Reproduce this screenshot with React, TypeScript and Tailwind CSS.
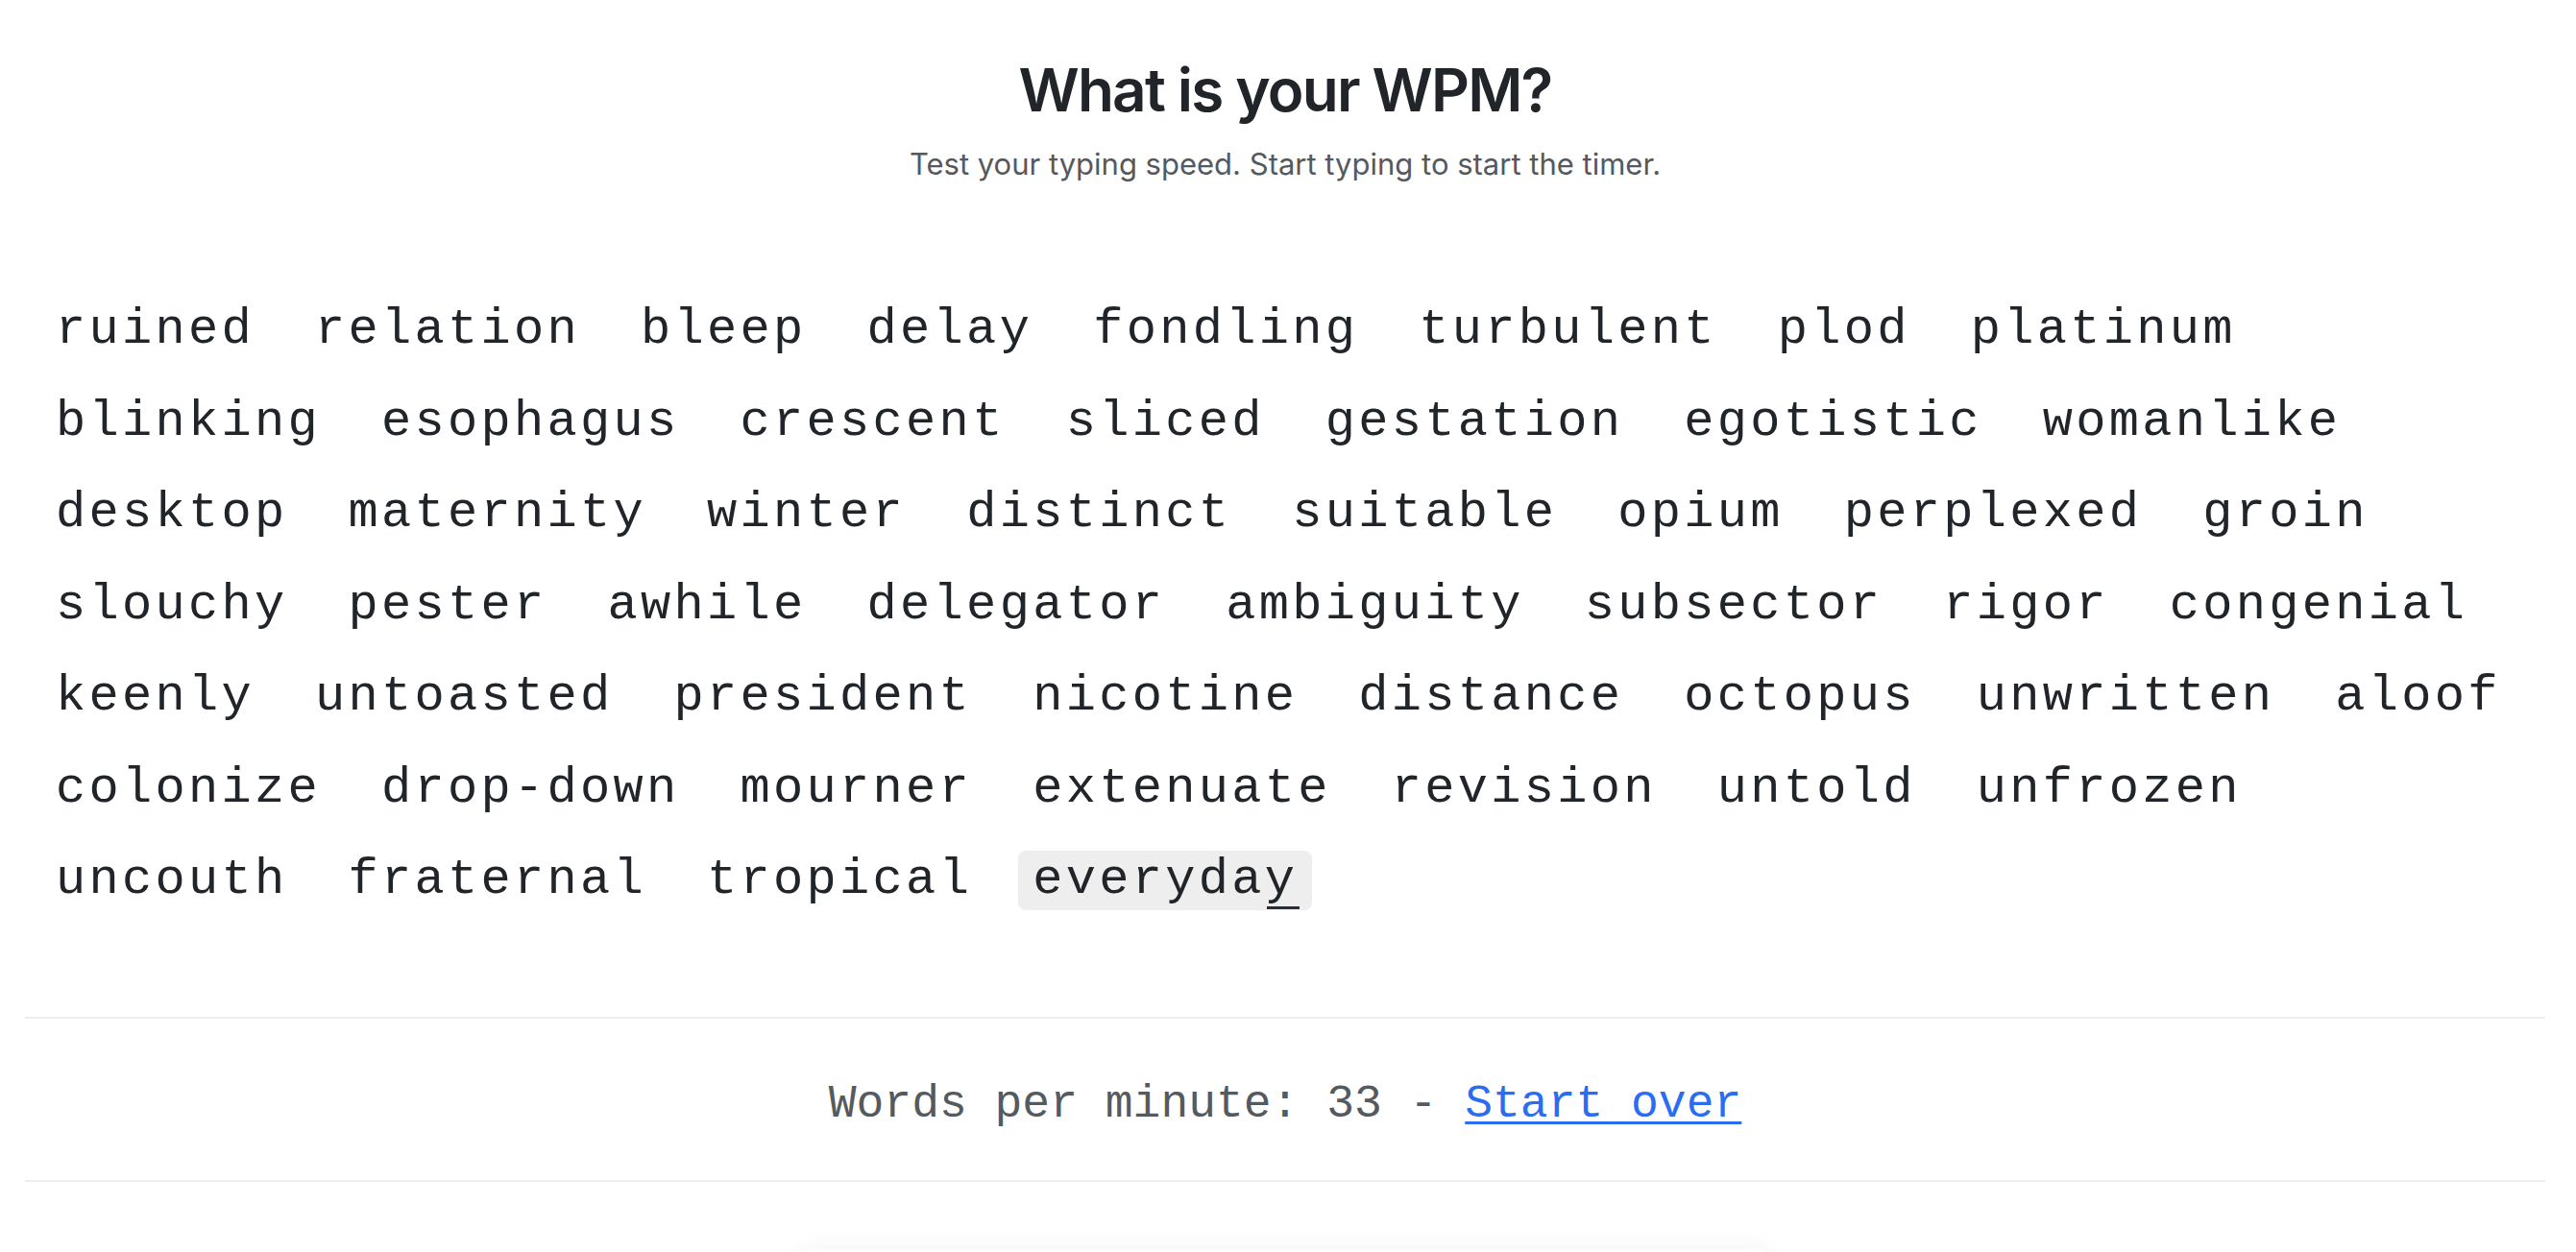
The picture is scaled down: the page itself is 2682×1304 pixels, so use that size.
import React from "react";

const ROWS: string[][] = [
  ["ruined", "relation", "bleep", "delay", "fondling", "turbulent", "plod", "platinum"],
  ["blinking", "esophagus", "crescent", "sliced", "gestation", "egotistic", "womanlike"],
  ["desktop", "maternity", "winter", "distinct", "suitable", "opium", "perplexed", "groin"],
  ["slouchy", "pester", "awhile", "delegator", "ambiguity", "subsector", "rigor", "congenial"],
  ["keenly", "untoasted", "president", "nicotine", "distance", "octopus", "unwritten", "aloof"],
  ["colonize", "drop-down", "mourner", "extenuate", "revision", "untold", "unfrozen"],
  ["uncouth", "fraternal", "tropical", "everyday"],
];

function Word({ text, active }: { text: string; active?: boolean }) {
  if (active) {
    const head = text.slice(0, -1);
    const last = text.slice(-1);
    return (
      <span className="inline-block h-[62px] leading-[62px] px-[15px] rounded-[8px] bg-[#eeeeee] whitespace-pre">
        {head}
        <span className="relative inline-block">
          {last}
          <span className="absolute left-[2px] right-[-2px] bottom-[1px] h-[3px] bg-[#2b2f33]" />
        </span>
      </span>
    );
  }
  return (
    <span className="inline-block h-[62px] leading-[62px] px-[15px] whitespace-pre">{text}</span>
  );
}

export default function App() {
  return (
    <div className="min-h-screen bg-white">
      <div className="ml-[26px] mr-[32px] pt-[56px]">
        <h1
          className="text-center text-[62px] leading-[75px] font-semibold text-[#212529] tracking-[-1.8px]"
          style={{ fontFamily: "Inter, 'Noto Sans', sans-serif" }}
        >
          What is your WPM?
        </h1>
        <p
          className="mt-[17px] text-center text-[31px] leading-[46px] text-[#55595e]"
          style={{ fontFamily: "Inter, 'Noto Sans', sans-serif" }}
        >
          Test your typing speed. Start typing to start the timer.
        </p>

        <div
          className="mt-[119px] pl-[17px] flex flex-col gap-y-[33.5px] text-[52px] tracking-[3.3px] text-[#212529]"
          style={{ fontFamily: "'Liberation Mono', 'DejaVu Sans Mono', monospace" }}
        >
          {ROWS.map((row, i) => (
            <div key={i} className="flex gap-x-[33px]">
              {row.map((w, j) => (
                <Word key={j} text={w} active={i === ROWS.length - 1 && j === row.length - 1} />
              ))}
            </div>
          ))}
        </div>

        <div
          className="mt-[111px] border-y-2 border-[#eeeeee] pt-[53px] pb-[43px] text-center text-[48px] leading-[72px] text-[#555a5f]"
          style={{ fontFamily: "'Liberation Mono', 'DejaVu Sans Mono', monospace" }}
        >
          Words per minute: 33 -{" "}
          <a
            href="#"
            className="text-[#2a6df0] underline decoration-[3px] underline-offset-[5px]"
          >
            Start over
          </a>
        </div>

        <div className="mx-auto mt-[70px] h-[200px] w-[1010px] rounded-xl bg-white shadow-[0_0_28px_rgba(0,0,0,0.05)]" />
      </div>
    </div>
  );
}
